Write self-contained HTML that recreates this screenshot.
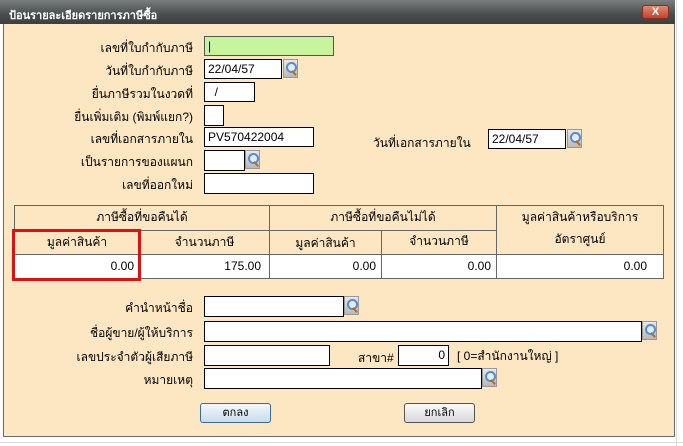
<!DOCTYPE html>
<html><head><meta charset="utf-8"><style>
*{margin:0;padding:0;box-sizing:border-box}
body{width:683px;height:446px;overflow:hidden;background:#fff;position:relative;font-family:"Liberation Sans","DejaVu Sans",sans-serif;font-size:12px;color:#000}
.a{position:absolute}
#dlg{left:3px;top:0;width:672px;height:437px;background:#fde6c2;border:1px solid #6a6a6a;border-top:none}
#title{left:0;top:0;width:675px;height:24px;background:linear-gradient(#7a7d7d,#4a4d4e 60%,#3c3e3f);color:#fff;font-weight:bold;font-size:11px;padding:6px 0 0 9px}
#close{left:642px;top:5px;width:27px;height:14px;background:linear-gradient(#e08a72,#c2442a);border:1px solid #8a3020;border-radius:3px;color:#fff;font-weight:bold;font-size:11px;text-align:center;line-height:12px}
.lbl{position:absolute;text-align:right;width:190px;left:3px;font-size:12px}
.in{position:absolute;background:#fff;border:1px solid #000;font-size:12px;padding:2px 3px;line-height:14px}
.ic{position:absolute;width:15px;height:19px;background:linear-gradient(#e8e8e8,#b8b8b8);border:1px solid #999}
.ic:before{content:"";position:absolute;left:2px;top:2px;width:7px;height:7px;border:2px solid #5a8ad0;border-radius:50%;background:#dfeeff}
.ic:after{content:"";position:absolute;left:9px;top:10px;width:2px;height:6px;background:#b07020;transform:rotate(-45deg)}
.c{position:absolute;border:1px solid #666;text-align:center;font-size:12px}
.btn{position:absolute;width:71px;height:20px;border:1px solid #555;border-radius:3px;background:linear-gradient(#fafafa,#d8d8d8);text-align:center;font-size:11px;line-height:18px}
.grid{position:absolute;background:#ddd}
</style></head><body>
<div class="grid a" style="left:676px;top:0;width:1px;height:446px"></div>
<div class="grid a" style="left:0;top:442px;width:683px;height:1px"></div>
<div id="dlg" class="a"></div>
<div id="title" class="a">ป้อนรายละเอียดรายการภาษีซื้อ</div>
<div id="close" class="a">X</div>

<div class="lbl" style="top:39px">เลขที่ใบกำกับภาษี</div>
<div class="in" style="left:204px;top:36px;width:130px;height:20px;background:#c6f59e;border-color:#555">|</div>
<div class="lbl" style="top:62px">วันที่ใบกำกับภาษี</div>
<div class="in" style="left:204px;top:59px;width:78px;height:20px">22/04/57</div>
<div class="ic" style="left:283px;top:59px"></div>
<div class="lbl" style="top:85px">ยื่นภาษีรวมในงวดที่</div>
<div class="in" style="left:204px;top:82px;width:51px;height:20px">&nbsp;&nbsp;/</div>
<div class="lbl" style="top:108px">ยื่นเพิ่มเติม (พิมพ์แยก?)</div>
<div class="in" style="left:204px;top:105px;width:20px;height:21px"></div>
<div class="lbl" style="top:130px">เลขที่เอกสารภายใน</div>
<div class="in" style="left:204px;top:127px;width:110px;height:20px">PV570422004</div>
<div class="a" style="left:373px;top:134px">วันที่เอกสารภายใน</div>
<div class="in" style="left:488px;top:129px;width:78px;height:20px">22/04/57</div>
<div class="ic" style="left:567px;top:129px"></div>
<div class="lbl" style="top:153px">เป็นรายการของแผนก</div>
<div class="in" style="left:204px;top:150px;width:41px;height:21px"></div>
<div class="ic" style="left:245px;top:150px"></div>
<div class="lbl" style="top:176px">เลขที่ออกใหม่</div>
<div class="in" style="left:204px;top:173px;width:110px;height:21px"></div>

<div class="a" style="left:14px;top:205px;width:650px;height:74px;border:1px solid #666;background:#fde6c2"></div>
<div class="c" style="left:14px;top:205px;width:256px;height:26px;line-height:22px">ภาษีซื้อที่ขอคืนได้</div>
<div class="c" style="left:269px;top:205px;width:228px;height:26px;line-height:22px">ภาษีซื้อที่ขอคืนไม่ได้</div>
<div class="c" style="left:496px;top:205px;width:168px;height:50px;line-height:22px;border-bottom:1px solid #666">มูลค่าสินค้าหรือบริการ<br>อัตราศูนย์</div>
<div class="c" style="left:14px;top:230px;width:126px;height:25px;line-height:22px">มูลค่าสินค้า</div>
<div class="c" style="left:139px;top:230px;width:131px;height:25px;line-height:22px">จำนวนภาษี</div>
<div class="c" style="left:269px;top:230px;width:113px;height:25px;line-height:24px">มูลค่าสินค้า</div>
<div class="c" style="left:381px;top:230px;width:116px;height:25px;line-height:20px">จำนวนภาษี</div>
<div class="c" style="left:14px;top:254px;width:126px;height:25px;background:#fff;text-align:right;padding-right:5px;line-height:23px">0.00</div>
<div class="c" style="left:139px;top:254px;width:131px;height:25px;background:#fff;text-align:right;padding-right:8px;line-height:23px">175.00</div>
<div class="c" style="left:269px;top:254px;width:113px;height:25px;background:#fff;text-align:right;padding-right:5px;line-height:23px">0.00</div>
<div class="c" style="left:381px;top:254px;width:116px;height:25px;background:#fff;text-align:right;padding-right:5px;line-height:23px">0.00</div>
<div class="c" style="left:496px;top:254px;width:168px;height:25px;background:#fff;text-align:right;padding-right:16px;line-height:23px">0.00</div>
<div class="a" style="left:12px;top:229px;width:129px;height:52px;border:3px solid #e01010"></div>

<div class="lbl" style="top:299px">คำนำหน้าชื่อ</div>
<div class="in" style="left:204px;top:296px;width:140px;height:21px"></div>
<div class="ic" style="left:344px;top:296px"></div>
<div class="lbl" style="top:324px">ชื่อผู้ขาย/ผู้ให้บริการ</div>
<div class="in" style="left:204px;top:321px;width:438px;height:21px"></div>
<div class="ic" style="left:642px;top:321px"></div>
<div class="lbl" style="top:348px">เลขประจำตัวผู้เสียภาษี</div>
<div class="in" style="left:204px;top:345px;width:126px;height:21px"></div>
<div class="a" style="left:358px;top:349px">สาขา#</div>
<div class="in" style="left:398px;top:345px;width:51px;height:21px;text-align:right">0</div>
<div class="a" style="left:457px;top:347px">[ 0=สำนักงานใหญ่ ]</div>
<div class="lbl" style="top:371px">หมายเหตุ</div>
<div class="in" style="left:204px;top:368px;width:278px;height:21px"></div>
<div class="ic" style="left:482px;top:368px"></div>

<div class="btn" style="left:200px;top:403px;border-color:#3a6a9a;background:linear-gradient(#f4f8fc,#c8dcec)">ตกลง</div>
<div class="btn" style="left:404px;top:403px">ยกเลิก</div>
</body></html>
